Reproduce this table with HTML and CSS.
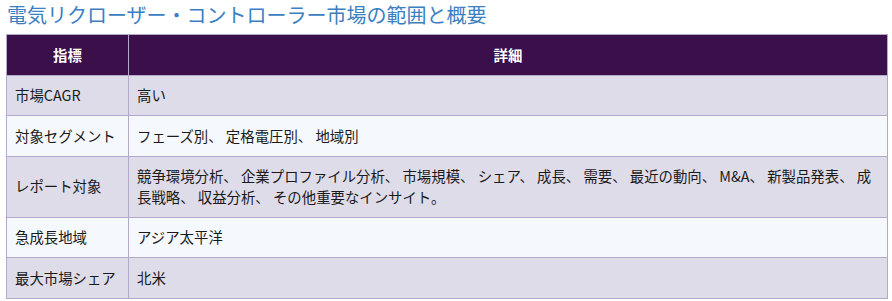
FILE: index.html
```html
<!DOCTYPE html>
<html lang="ja">
<head>
<meta charset="utf-8">
<title>電気リクローザー・コントローラー市場の範囲と概要</title>
<link rel="stylesheet" href="styles.css">
</head>
<body>
<div class="page">
  <h2 class="title">電気リクローザー・コントローラー市場の範囲と概要</h2>
  <table class="scope">
    <colgroup>
      <col class="col-key">
      <col class="col-val">
    </colgroup>
    <thead>
      <tr><th>指標</th><th>詳細</th></tr>
    </thead>
    <tbody>
      <tr class="odd"><td>市場CAGR</td><td>高い</td></tr>
      <tr class="even"><td>対象セグメント</td><td>フェーズ別、 定格電圧別、 地域別</td></tr>
      <tr class="odd"><td>レポート対象</td><td>競争環境分析、 企業プロファイル分析、 市場規模、 シェア、 成長、 需要、 最近の動向、 M&amp;A、 新製品発表、 成長戦略、 収益分析、 その他重要なインサイト。</td></tr>
      <tr class="even"><td>急成長地域</td><td>アジア太平洋</td></tr>
      <tr class="odd"><td>最大市場シェア</td><td>北米</td></tr>
    </tbody>
  </table>
</div>
</body>
</html>
```

FILE: styles.css
```css
html, body {
  margin: 0;
  padding: 0;
  background: #ffffff;
}

body {
  font-family: "Noto Sans CJK JP", "Noto Sans", sans-serif;
  color: #1a1a1a;
}

.page {
  padding: 0 0 0 6px;
}

.title {
  margin: 0 0 5px 1px;
  font-size: 20px;
  line-height: 29px;
  font-weight: 400;
  color: #3a80c2;
}

.scope {
  width: 882px;
  border-collapse: collapse;
  table-layout: fixed;
  font-size: 14.4px;
  line-height: 20.5px;
}

.col-key {
  width: 122px;
}

.scope th,
.scope td {
  border: 1px solid #b3aacb;
  padding: 9.5px 8px;
  text-align: left;
  vertical-align: middle;
}

.scope th {
  background: #3a0f4a;
  color: #ffffff;
  font-weight: 700;
  text-align: center;
}

.scope tr.odd td {
  background: #dfdcea;
}

.scope tr.even td {
  background: #f5f8fc;
}
```
